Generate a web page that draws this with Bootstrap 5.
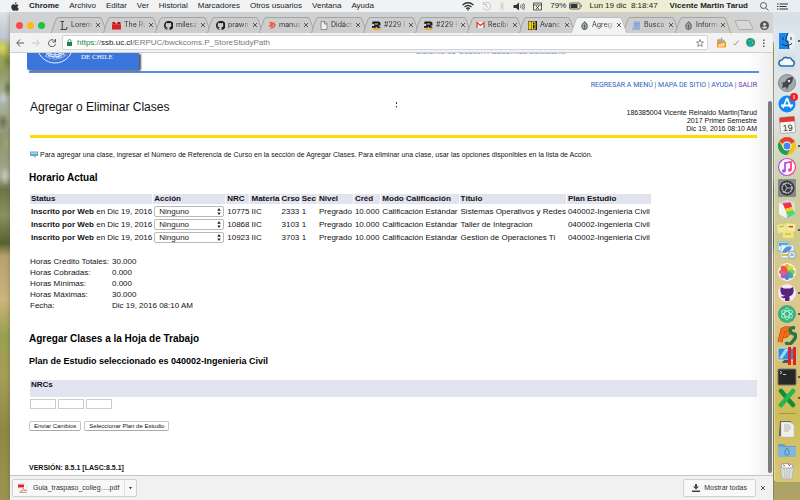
<!DOCTYPE html>
<html lang="es">
<head>
<meta charset="utf-8">
<meta name="viewport" content="width=device-width, initial-scale=1">
<title>Agregar o Eliminar Clases</title>
<link rel="stylesheet" href="https://cdn.jsdelivr.net/npm/bootstrap@5.3.0/dist/css/bootstrap.min.css">
<style>
body{font:8px/10px "Liberation Sans",Arial,sans-serif;color:#111;background:
 radial-gradient(ellipse 7px 9px at 2px 48px,#d9d95e,transparent),
 radial-gradient(ellipse 6px 8px at 8px 62px,#74853c,transparent),
 radial-gradient(ellipse 5px 7px at 3px 98px,#c3cbd0,transparent),
 radial-gradient(ellipse 5px 9px at 8px 88px,#6c7848,transparent),
 radial-gradient(ellipse 6px 9px at 3px 122px,#69744c,transparent),
 radial-gradient(ellipse 6px 12px at 7px 143px,#a0a376,transparent),
 radial-gradient(ellipse 6px 10px at 5px 176px,#c6c8ba,transparent),
 linear-gradient(#dde1e4 12px,#bcc6cd 38px,#a7ab52 48px,#8f9a60 70px,#aeb5a2 100px,#8d936f 140px,#a5a78d 175px,#6b7548 190px,#8d915f 215px,#55622f 243px,#b9a16f 256px,#cbb47d 300px,#98a050 335px,#a79d57 375px,#8e8844 430px,#9c9450 500px);}
.menubar{background:linear-gradient(90deg,#f1f2f3 60%,#ececd0 75%,#eeeed2 82%,#eef0ee 90%,#e7edf3);font-size:8px;line-height:12px;height:12px;color:#222;padding:0 12px 0 11px}
.menubar a{color:inherit;text-decoration:none}
.menubar svg,.tabs svg,.tools svg,.dock svg{display:block;flex:none}
.appmenu{gap:10px}
.status{gap:8px}
.desk{padding-left:10px}
.chromewin{background:#fff;box-shadow:0 0 4px #5558;border-radius:3px 3px 0 0}
.tabs{background:linear-gradient(90deg,#d0d1d2 70%,#cfcec4 85%,#d2d3d4);padding:5px 4px 0 6px;height:21px;border-radius:3px 3px 0 0}
.lights{gap:4px;margin-right:5px}
.lights button{width:7px;height:7px;border:0;border-radius:50%;padding:0}
.tab-item{height:16px;flex:1 1 0;min-width:0;padding-left:10px;gap:3px}
.tab-item .shape{position:absolute;left:0;top:0;width:calc(100% + 6px);height:16px;fill:#cdcdcd;stroke:#a4a4a4}
.tab-item a,.tab-item button,.tab-item .fav{position:relative;z-index:2}
.tab-item.current{z-index:3}
.tab-item.current .shape{fill:#f3f3f3;stroke:#bdbdbd}
.tab-item a{color:#333;text-decoration:none;font:7px/16px Inter,"Liberation Sans",sans-serif;width:21px;-webkit-mask-image:linear-gradient(90deg,#000 60%,#0003);mask-image:linear-gradient(90deg,#000 60%,#0003)}
.tab-item button,.closebar{border:0;background:none;padding:0;color:#555}
.newtab{margin-left:8px}
.person{margin-left:6px}
.tools{height:20px;background:#f2f2f2;border-bottom:1px solid #cfcfcf;padding:0 8px 0 6px;gap:8px}
.tools button{border:0;background:none;padding:0}
.extras{gap:7px}
.address{height:15px;background:#fff;border:1px solid #d4d4d4;border-radius:2px;padding:0 3px 0 4px;gap:5px;margin-left:-2px}
.url{font-size:8px;line-height:13px;color:#777}
.url b{font-weight:400;color:#222}.url i{font-style:normal;color:#16893c}
.pagebox{background:linear-gradient(90deg,#fff calc(100% - 26px),#eee);padding:0 16px 0 19px}
.thumb{position:absolute;right:1px;top:48px;bottom:2px;width:4px;border-radius:2px;background:#7b7b7b}
.banner{height:20px;border-bottom:2px solid #5791e0;margin-right:-2px}
.crest{position:relative;z-index:1;margin-left:-2px;width:112px;height:17px;background:#3b76dd;border-radius:0 0 2px 2px;box-shadow:2px 1px 2px #555}
.system{color:#5b8fe0;margin:-6px 193px 0 0}
.links{font:7px/10px Roboto,"Liberation Sans",sans-serif;padding-top:7px;color:#555}
.links a{color:#2b62bd;text-decoration:none}.links a.seen{color:#70339c}
.pagehead{border-bottom:3px solid #ffdb00;height:48px;padding:8px 0 2px;margin-left:1px}
.pagehead h1{font-size:12px;line-height:18px;margin:0;font-weight:400}
.who{font-size:7px;line-height:8px}
.help{margin:12px 0 0 1px;font-size:7px;gap:2px}
h2{font-size:10px;line-height:12px;font-weight:700;margin:0;color:#000}
h2.now{margin-top:12px}
h2.add{margin:22px 0 11px}
h3{font-size:9px;line-height:10px;font-weight:700;margin:0;color:#000}
.sched{border-collapse:separate;border-spacing:1px;margin-top:9px;white-space:nowrap}
.sched th{background:#e1e4ee;padding:0 1px;height:10px;line-height:10px}
.sched td{padding:0 1px;height:12px;line-height:11px}
.sched :is(th,td):is(:nth-child(1),:nth-child(3),:nth-child(4),:nth-child(5),:nth-child(10)){padding-right:0}
.sched select{display:block;width:70px;height:11px;font:8px/9px "Liberation Sans",sans-serif;border:1px solid #b8b8b8;border-radius:2px;padding:0 4px;appearance:none;color:#222;background:#fff url("data:image/svg+xml,%3Csvg xmlns='http://www.w3.org/2000/svg' viewBox='0 0 4 8'%3E%3Cpath d='M0 3L2 0 4 3zM0 5h4L2 8z' fill='%23222'/%3E%3C/svg%3E") no-repeat right 2px center/4px 7px}
.totals{margin:12px 0 0 1px}
.totals th{font-weight:400;padding:0;width:82px}.totals td{padding:0}.totals tr{height:11px;line-height:11px}
.band{background:#e1e4ee;height:17px;margin-top:14px;margin-left:1px;padding-left:1px;font-weight:700;line-height:10px}
.nrcs{gap:2px;margin:2px 0 0 1px}
.nrcs input{width:26px;height:10px;border:1px solid #ccc;padding:0 2px;font-size:7px;background:#fff}
.acts{gap:3px;margin-top:12px}
.acts button{font:6px/8px "Liberation Sans",sans-serif;border:1px solid #c4c4c4;border-bottom-color:#aaa;border-radius:2px;background:#fff;height:10px;padding:0 4px;display:flex;align-items:center;color:#111}
.ver{font-size:7px;margin-top:32px}
.shelf{height:25px;background:#f1f1f1;border-top:1px solid #c6c6c6;padding:0 3px 0 2px;font-size:7px}
.shelf .chip{border:1px solid #d2d2d2;border-radius:2px;background:#f8f8f8;height:18px;padding:0;font:inherit;color:#333}
.shelf .cell{padding:0 5px;height:16px}
.dock{width:27px;padding-left:1px}
.dockbox{margin-top:16px;border-radius:3px 0 0 3px;border-left:1px solid #eee8;background:linear-gradient(#dde4ec,#dfe4e6 80px,#cccda0 165px,#cfc98b 210px,#dfc78c 280px,#d6c070 340px,#cdbd58 385px,#dac670);padding:3px 0 1px 2px;gap:1px}
.dockbox hr{margin:4px 4px 4px 2px;border-top:1px solid #867c3c;opacity:.6}
.dockbox .run::after{content:"";width:2px;height:2px;border-radius:1px;background:#333;margin-left:1px}
.pointer{position:absolute;left:385px;top:49px}
.dock::after{content:"";flex:1;background:linear-gradient(#a8a263,#b1a46a)}
.dock{background:linear-gradient(#d8e0e8,#d8e0e8 30px,transparent 30px)}
</style>
<script src="https://cdn.jsdelivr.net/npm/bootstrap@5.3.0/dist/js/bootstrap.bundle.min.js"></script>
</head>
<body class="vh-100 overflow-hidden d-flex flex-column">
<svg width="0" height="0" class="position-absolute" aria-hidden="true">
<symbol id="tab" viewBox="0 0 58 16" preserveAspectRatio="none"><path d="M0 16.500C2 16 2 14 3 11L6 2.500Q7 .5 8 .5H50Q51 .5 52 2.500L55 11C56 14 56 16 58 16.500"/></symbol>
<symbol id="x" viewBox="0 0 6 6"><path d="M1 1l4 4M5 1L1 5" stroke="#555" stroke-width="1" fill="none"/></symbol>
<symbol id="gh" viewBox="0 0 16 16"><path fill="#1c1c1c" d="M8 0C3.580 0 0 3.580 0 8c0 3.540 2.290 6.530 5.470 7.590.4.070.550-.170.550-.380v-1.490C3.780 14.200 3.310 12.650 3.310 12.650c-.360-.920-.890-1.170-.890-1.170-.730-.500.050-.490.050-.490.810.060 1.230.830 1.230.830.720 1.230 1.880.870 2.340.670.070-.520.280-.870.510-1.070-1.780-.200-3.640-.890-3.640-3.950 0-.870.310-1.590.820-2.150-.080-.200-.360-1.020.080-2.120 0 0 .670-.210 2.200.820a7.600 7.600 0 0 1 4 0c1.530-1.040 2.200-.820 2.200-.820.440 1.100.160 1.920.080 2.120.510.560.820 1.270.820 2.150 0 3.070-1.870 3.750-3.650 3.950.290.250.540.730.540 1.480v2.600c0 .210.150.460.550.380A8 8 0 0 0 8 0z"/></symbol>
<symbol id="rr" viewBox="0 0 16 16"><path d="M1 1h11l3 2v5h-4l4 3v1H9L7 9v3H0V9h4V5H0z" fill="#181818"/><path d="M5 4.500h6v1.500H5z" fill="#ddd"/><path d="M1 13h14v3H3z" fill="#f5a623"/></symbol>
<symbol id="uc" viewBox="0 0 16 16"><path d="M8 0c2 3 6 4 6 9s-3 7-6 7-6-3-6-7S6 4 8 0z" fill="#4b6fa8"/><path d="M8 3l4 5-1 5H5L4 8z" fill="#eab83a"/><path d="M8 6v7M5.500 9h5" stroke="#32598f" stroke-width="1.500"/></symbol>
</svg>

<header class="menubar d-flex align-items-center justify-content-between text-nowrap">
<nav class="appmenu d-flex align-items-center">
<svg width="8" height="9" viewBox="0 0 16 18"><path fill="#333" d="M11 0c0 2-1.500 4-3.500 4C7.300 2 9 .3 11 0zM8 5.500c1 0 2-1 3.600-1 1.300 0 2.600.7 3.400 1.900-3 1.700-2.500 5.700.6 6.900-.7 1.900-2.300 4.400-3.900 4.400-1.200 0-1.700-.8-3.200-.8s-2 .8-3.200.8C3.300 17.700.5 13.500.5 10c0-3.600 2.300-5.500 4.300-5.500 1.300 0 2.300 1 3.200 1z"/></svg>
<a href="#"><b>Chrome</b></a><a href="#">Archivo</a><a href="#">Editar</a><a href="#">Ver</a><a href="#">Historial</a><a href="#">Marcadores</a><a href="#">Otros usuarios</a><a href="#">Ventana</a><a href="#">Ayuda</a>
</nav>
<div class="status d-flex align-items-center">
<svg width="12" height="9" viewBox="0 0 24 18"><g fill="none" stroke="#333" stroke-width="2.600"><path d="M1 6Q12-3 23 6M5 10q7-6 14 0M8.500 13.500q3.500-3 7 0"/></g><path d="M12 18l-2.500-3h5z" fill="#333"/></svg>
<svg width="9" height="9" viewBox="0 0 18 18"><path d="M3 4a8 8 0 1 1-1 7M9 4v5l4 3M3 0v5h5" fill="none" stroke="#b9b9a6" stroke-width="1.500"/></svg>
<svg width="6" height="9" viewBox="0 0 12 18"><path d="M2 5l8 8-4 4V1l4 4-8 8" fill="none" stroke="#c2c2ae" stroke-width="1.500"/></svg>
<svg width="12" height="9" viewBox="0 0 24 18"><path d="M1 6h5l6-5v16l-6-5H1z" fill="#333"/><path d="M15 6q2 3 0 6M18 4q4 5 0 10M21 2q5 7 0 14" fill="none" stroke="#444" stroke-width="1.500"/></svg>
<svg width="9" height="9" viewBox="0 0 18 18"><path d="M1 2h16v14H1zM1 6h16M6 8l6 6M12 8l-6 6" fill="none" stroke="#333" stroke-width="1.600"/></svg>
<span class="d-flex align-items-center">79%&nbsp;
<svg width="13" height="8" viewBox="0 0 26 16"><rect x="1" y="2" width="21" height="12" rx="2" fill="none" stroke="#333" stroke-width="1.500"/><path d="M3 4h14v8H3z" fill="#333"/><path d="M24 5q3 3 0 6z" fill="#333"/></svg></span>
<span>Lun 19 dic&nbsp; 8:18:47</span><b class="mx-1">Vicente Martin Tarud</b>
<svg width="9" height="9" viewBox="0 0 18 18"><path d="M12 12l5 5M13 7A6 6 0 1 1 1 7a6 6 0 0 1 12 0z" fill="none" stroke="#333" stroke-width="1.600"/></svg>
<svg width="11" height="7" viewBox="0 0 22 14"><path d="M0 2h3M5 2h17M0 7h3M5 7h14M0 12h3M5 12h17" stroke="#333" stroke-width="2"/></svg>
</div>
</header>

<div class="desk d-flex flex-grow-1 overflow-hidden">
<div class="chromewin d-flex flex-column flex-grow-1 overflow-hidden">
<div class="tabs d-flex align-items-center text-nowrap">
<div class="lights d-flex"><button type="button" style="background:#fc4948" aria-label="Cerrar"></button><button type="button" style="background:#fdb912" aria-label="Minimizar"></button><button type="button" style="background:#19c637" aria-label="Ampliar"></button></div>
<div class="d-flex flex-fill">
<div class="tab-item position-relative d-flex align-items-center"><svg class="shape"><use href="#tab"/></svg><svg class="fav" width="8" height="9" viewBox="0 0 16 18"><path d="M1 1h7M4.500 1v15M1 17h12l1-5" fill="none" stroke="#444" stroke-width="2"/></svg><a href="#">Lorem</a><button type="button" aria-label="Cerrar pestaña"><svg width="6" height="6"><use href="#x"/></svg></button></div>
<div class="tab-item position-relative d-flex align-items-center"><svg class="shape"><use href="#tab"/></svg><svg class="fav" width="9" height="9" viewBox="0 0 18 18"><path d="M1 2h5v3h5V2h6v5H1z" fill="#b80f12"/><path d="M0 7h18v10H0z" fill="#dd2023"/></svg><a href="#">The Ru</a><button type="button" aria-label="Cerrar pestaña"><svg width="6" height="6"><use href="#x"/></svg></button></div>
<div class="tab-item position-relative d-flex align-items-center"><svg class="shape"><use href="#tab"/></svg><svg class="fav" width="9" height="9"><use href="#gh"/></svg><a href="#">milesz</a><button type="button" aria-label="Cerrar pestaña"><svg width="6" height="6"><use href="#x"/></svg></button></div>
<div class="tab-item position-relative d-flex align-items-center"><svg class="shape"><use href="#tab"/></svg><svg class="fav" width="9" height="9"><use href="#gh"/></svg><a href="#">prawn</a><button type="button" aria-label="Cerrar pestaña"><svg width="6" height="6"><use href="#x"/></svg></button></div>
<div class="tab-item position-relative d-flex align-items-center"><svg class="shape"><use href="#tab"/></svg><svg class="fav" width="8" height="8" viewBox="0 0 16 16"><path d="M3 2q4 4 10 2-3 3-8 3M2 9q5 2 8-1M5 14q8 0 9-8" fill="none" stroke="#ec5b2a" stroke-width="3"/></svg><a href="#">manua</a><button type="button" aria-label="Cerrar pestaña"><svg width="6" height="6"><use href="#x"/></svg></button></div>
<div class="tab-item position-relative d-flex align-items-center"><svg class="shape"><use href="#tab"/></svg><svg class="fav" width="8" height="9" viewBox="0 0 16 18"><path d="M2 1h8l4 4v12H2zM9 1v5h5" fill="#eee" stroke="#777" stroke-width="1.500"/></svg><a href="#">Didáct</a><button type="button" aria-label="Cerrar pestaña"><svg width="6" height="6"><use href="#x"/></svg></button></div>
<div class="tab-item position-relative d-flex align-items-center"><svg class="shape"><use href="#tab"/></svg><svg class="fav" width="9" height="9"><use href="#rr"/></svg><a href="#">#229 P</a><button type="button" aria-label="Cerrar pestaña"><svg width="6" height="6"><use href="#x"/></svg></button></div>
<div class="tab-item position-relative d-flex align-items-center"><svg class="shape"><use href="#tab"/></svg><svg class="fav" width="9" height="9"><use href="#rr"/></svg><a href="#">#229 P</a><button type="button" aria-label="Cerrar pestaña"><svg width="6" height="6"><use href="#x"/></svg></button></div>
<div class="tab-item position-relative d-flex align-items-center"><svg class="shape"><use href="#tab"/></svg><svg class="fav" width="9" height="8" viewBox="0 0 18 14"><path d="M1 1h16v12H1z" fill="#f5f5f5"/><path d="M2 13V2l7 6 7-6v11" fill="none" stroke="#d9382c" stroke-width="2.500"/></svg><a href="#">Recibi</a><button type="button" aria-label="Cerrar pestaña"><svg width="6" height="6"><use href="#x"/></svg></button></div>
<div class="tab-item position-relative d-flex align-items-center"><svg class="shape"><use href="#tab"/></svg><svg class="fav" width="9" height="9" viewBox="0 0 18 18"><path d="M0 0h18v18H0z" fill="#222"/><path d="M1 1h5v16H1z" fill="#f3d20e"/><path d="M7 1h8v16H7z" fill="#f8df36"/><path d="M10 3h3v3h-3zM10 7h3v8h-3z" fill="#111"/></svg><a href="#">Avanc</a><button type="button" aria-label="Cerrar pestaña"><svg width="6" height="6"><use href="#x"/></svg></button></div>
<div class="tab-item current position-relative d-flex align-items-center"><svg class="shape"><use href="#tab"/></svg><svg class="fav" width="9" height="9"><use href="#uc"/></svg><a href="#">Agrega</a><button type="button" aria-label="Cerrar pestaña"><svg width="6" height="6"><use href="#x"/></svg></button></div>
<div class="tab-item position-relative d-flex align-items-center"><svg class="shape"><use href="#tab"/></svg><svg class="fav" width="9" height="9" viewBox="0 0 18 18"><path d="M3 1h13v16H3z" fill="#8fb0d8"/><path d="M1 15h13v2H1zM6 5h7M6 8h7" fill="#eef" stroke="#6e93c0"/></svg><a href="#">Busca</a><button type="button" aria-label="Cerrar pestaña"><svg width="6" height="6"><use href="#x"/></svg></button></div>
<div class="tab-item position-relative d-flex align-items-center"><svg class="shape"><use href="#tab"/></svg><svg class="fav" width="9" height="9"><use href="#uc"/></svg><a href="#">Inform</a><button type="button" aria-label="Cerrar pestaña"><svg width="6" height="6"><use href="#x"/></svg></button></div>
</div>
<svg class="newtab" width="20" height="10" viewBox="0 0 20 10"><path d="M1 1q0-.5 1-.5h12q1 0 1.500 1L19 8.500q0 1-1 1H6q-1 0-1.500-1z" fill="#d8d8d8" stroke="#aaa"/></svg>
<svg class="person" width="9" height="9" viewBox="0 0 18 18"><circle cx="9" cy="9" r="9" fill="#555"/><circle cx="9" cy="6.500" r="3" fill="#d4d4d4"/><path d="M3.500 13q5.500-5 11 0-5.500 5-11 0z" fill="#d4d4d4"/></svg>
</div>

<div class="tools d-flex align-items-center">
<button type="button" aria-label="Atrás"><svg width="8" height="8" viewBox="0 0 16 16"><path d="M16 8H2M8 1L1.500 8 8 15" fill="none" stroke="#555" stroke-width="2"/></svg></button>
<button type="button" aria-label="Adelante"><svg width="8" height="8" viewBox="0 0 16 16"><path d="M0 8h14M8 1l6.500 7L8 15" fill="none" stroke="#c5c5c5" stroke-width="2"/></svg></button>
<button type="button" aria-label="Recargar"><svg width="8" height="8" viewBox="0 0 16 16"><path d="M13.500 4A7 7 0 1 0 15 10M15 0v6H9" fill="none" stroke="#555" stroke-width="2"/></svg></button>
<div class="address d-flex align-items-center flex-grow-1">
<svg width="5" height="7" viewBox="0 0 10 14"><path d="M0 6h10v8H0z" fill="#16893c"/><path d="M2 6V4q0-3 3-3t3 3v2" fill="none" stroke="#16893c" stroke-width="1.600"/></svg>
<span class="url flex-grow-1"><i>https</i>://<b>ssb.uc.cl</b>/ERPUC/bwckcoms.P_StoreStudyPath</span>
<svg width="8" height="8" viewBox="0 0 16 16"><path d="M8 1l2 5h5l-4 3.500 1.500 5.500L8 12l-4.500 3L5 9.500 1 6h5z" fill="none" stroke="#555" stroke-width="1.300"/></svg>
</div>
<div class="extras d-flex align-items-center">
<svg width="10" height="12" viewBox="0 0 20 24"><path d="M2 6l4-3 2 3 3-6 3 6 4 1v6H2z" fill="#aaa"/><path d="M2 10h18v11H2z" fill="#fb940f"/><text x="11" y="19" text-anchor="middle" font-size="10" font-weight="700" fill="#fff">off</text></svg>
<svg width="6" height="6" viewBox="0 0 12 12"><path d="M1 7l3 3 7-9" fill="none" stroke="#999" stroke-width="2"/></svg>
<svg width="9" height="9" viewBox="0 0 18 18"><circle cx="9" cy="9" r="9" fill="#20a4c4"/><path d="M2 4q4-5 8-3L8 6 5 7l2 4-2 4Q0 12 2 4zM11 6l6-1q2 6-3 11l-3-4z" fill="#2f9b3b"/><path d="M5 4l3 1-2 2zM12 8h3l-2 4z" fill="#e7d63e"/></svg>
<button type="button" aria-label="Menú"><svg width="3" height="8" viewBox="0 0 6 16"><path d="M2 1h3v3H2zM2 7h3v3H2zM2 13h3v3H2z" fill="#555"/></svg></button>
</div>
</div>

<main class="pagebox position-relative flex-grow-1 overflow-hidden">
<div class="banner d-flex justify-content-between align-items-start">
<svg class="crest" viewBox="0 0 112 17"><g fill="none" stroke="#e5eefc"><circle cx="28" cy="-8" r="18"/><circle cx="28" cy="-8" r="12"/><path d="M20 -2v-5M24 2v-6M28 3v-8M32 2v-6M36-1v-5M21 0q7 4 14 0" stroke-width="1"/></g><path id="arc" d="M12-5a17 17 0 0 0 32 0" fill="none"/><text font-family="Liberation Serif" font-size="5" fill="#fff"><textPath href="#arc" startOffset="10">DE·CHILE</textPath></text><text x="54" y="6" font-family="Liberation Serif" font-size="7" fill="#fff">DE CHILE</text></svg>
<span class="system">Sistema de Gestión Académica Estudiantil</span>
</div>
<nav class="links text-end"><a href="#">REGRESAR A MENÚ</a> | <a href="#">MAPA DE SITIO</a> | <a href="#">AYUDA</a> | <a href="#" class="seen">SALIR</a></nav>
<div class="pagehead d-flex justify-content-between"><h1>Agregar o Eliminar Clases</h1><div class="who text-end align-self-end">186385004 Vicente Reinaldo Martin|Tarud<br>2017 Primer Semestre<br>Dic 19, 2016 08:10 AM</div></div>
<svg class="pointer" width="3" height="6" viewBox="0 0 3 6"><path d="M1 0h1v2H1zM1 4h1v1l-1 1z" fill="#333"/></svg>
<p class="help d-flex align-items-center"><svg width="8" height="8" viewBox="0 0 16 16"><path d="M0 1h16v9h-5v4l-4-4H0z" fill="#65a9d1"/><path d="M2 3h12v3H2z" fill="#b1d4e8"/></svg><span>Para agregar una clase, ingresar el Número de Referencia de Curso en la sección de Agregar Clases. Para eliminar una clase, usar las opciones disponibles en la lista de Acción.</span></p>
<h2 class="now" id="hz">Horario Actual</h2>
<table class="sched" aria-labelledby="hz">
<thead><tr><th>Status</th><th>Acción</th><th>NRC</th><th>Materia</th><th>Crso</th><th>Sec</th><th>Nivel</th><th>Créd</th><th>Modo Calificación</th><th>Título</th><th>Plan Estudio</th></tr></thead>
<tbody>
<tr><td><b>Inscrito por Web</b> en Dic 19, 2016</td><td><select aria-label="Acción 10775"><option>Ninguno</option></select></td><td>10775</td><td>IIC</td><td>2333</td><td>1</td><td>Pregrado</td><td>10.000</td><td>Calificación Estándar</td><td>Sistemas Operativos y Redes</td><td>040002-Ingenieria Civil</td></tr>
<tr><td><b>Inscrito por Web</b> en Dic 19, 2016</td><td><select aria-label="Acción 10868"><option>Ninguno</option></select></td><td>10868</td><td>IIC</td><td>3103</td><td>1</td><td>Pregrado</td><td>10.000</td><td>Calificación Estándar</td><td>Taller de Integracion</td><td>040002-Ingenieria Civil</td></tr>
<tr><td><b>Inscrito por Web</b> en Dic 19, 2016</td><td><select aria-label="Acción 10923"><option>Ninguno</option></select></td><td>10923</td><td>IIC</td><td>3703</td><td>1</td><td>Pregrado</td><td>10.000</td><td>Calificación Estándar</td><td>Gestion de Operaciones Ti</td><td>040002-Ingenieria Civil</td></tr>
</tbody></table>
<table class="totals"><tbody>
<tr><th scope="row">Horas Crédito Totales:</th><td>30.000</td></tr><tr><th scope="row">Horas Cobradas:</th><td>0.000</td></tr><tr><th scope="row">Horas Mínimas:</th><td>0.000</td></tr><tr><th scope="row">Horas Máximas:</th><td>30.000</td></tr><tr><th scope="row">Fecha:</th><td>Dic 19, 2016 08:10 AM</td></tr>
</tbody></table>
<h2 class="add">Agregar Clases a la Hoja de Trabajo</h2>
<h3>Plan de Estudio seleccionado es 040002-Ingenieria Civil</h3>
<div class="band">NRCs</div>
<div class="nrcs d-flex"><input type="text" aria-label="NRC 1"><input type="text" aria-label="NRC 2"><input type="text" aria-label="NRC 3"></div>
<div class="acts d-flex"><button type="button">Enviar Cambios</button><button type="button">Seleccionar Plan de Estudio</button></div>
<div class="ver"><b>VERSIÓN: 8.5.1 [LASC:8.5.1]</b></div>
<div class="thumb"></div>
</main>

<footer class="shelf d-flex align-items-center justify-content-between">
<div class="chip d-flex align-items-center"><span class="cell d-flex align-items-center gap-1"><svg width="9" height="10" viewBox="0 0 18 20"><path d="M1 1h10l6 5v13H3z" fill="#fff" stroke="#ccc"/><path d="M0 3h12v6H0z" fill="#e1251b"/><path d="M5 17q6-4 5-7 2 5 7 5-7 0-12 2z" fill="none" stroke="#e1251b"/><path d="M3 19h14" stroke="#777"/></svg>&nbsp;Guia_traspaso_colleg….pdf</span><button type="button" class="border-0 border-start bg-transparent p-0 px-1 h-100" aria-label="Opciones"><svg width="3" height="3" viewBox="0 0 4 4" class="d-block"><path d="M0 0h4L2 3z" fill="#333"/></svg></button></div>
<div class="d-flex align-items-center"><button type="button" class="chip d-flex align-items-center gap-1 px-2"><svg width="8" height="8" viewBox="0 0 16 16"><path d="M6 0h4v5h4l-6 6-6-6h4zM0 13h16v3H0z" fill="#444"/></svg>Mostrar todas</button><button type="button" class="closebar p-1" aria-label="Cerrar barra"><svg width="6" height="6" class="d-block"><use href="#x"/></svg></button></div>
</footer>
</div>

<aside class="dock d-flex flex-column flex-shrink-0">
<div class="dockbox d-flex flex-column">
<div class="run d-flex align-items-center"><svg width="20" height="20" viewBox="0 0 20 20"><rect x="2" y="2" width="16" height="16" rx="1" fill="#e8f0f7"/><path d="M2 2h9q-2 4-2 8h2q0 5 1 8H2z" fill="#1789ee"/><path d="M6 6v3M14 6v3M5 13q5 3.500 10-.5M11 2q-2 4-2 8h2q0 5 1 8" stroke="#16324f" fill="none"/></svg></div>
<div class="d-flex"><svg width="20" height="20" viewBox="0 0 20 20"><rect x="1" y="1" width="18" height="18" rx="2" fill="#d6e1e9"/><path d="M5 14a3 3 0 0 1 0-6q2-4 6-2 3-1 4 2 4 2 1 6z" fill="#f2f7fb" stroke="#2c6fa8" stroke-width="1.600"/></svg></div>
<div class="d-flex"><svg width="20" height="20" viewBox="0 0 20 20"><circle cx="10" cy="10" r="8.500" fill="#a3a9ad" stroke="#888"/><path d="M16 4q-6 0-8 5l-4 1 2 1-1 4 4-1 1 3 2-5q4-2 4-8z" fill="#43484c"/><circle cx="12" cy="8" r="1.300" fill="#ddd"/></svg></div>
<div class="d-flex"><svg width="20" height="20" viewBox="0 0 20 20" overflow="visible"><circle cx="10" cy="10" r="8.500" fill="#1288f4"/><path d="M10 4l-4 10M10 4l4 10M4 11.500h12" stroke="#fff" stroke-width="1.800" fill="none"/><circle cx="17" cy="3" r="4" fill="#f51f22"/><path d="M17 1v4" stroke="#fff"/></svg></div>
<div class="d-flex"><svg width="20" height="20" viewBox="0 0 20 20"><g transform="rotate(-5 10 10)"><rect x="3" y="2" width="15" height="16" rx="1" fill="#f5f5f3" stroke="#999" stroke-width=".7"/><path d="M3 2h15v5H3z" fill="#dc3931"/><text x="10.500" y="16" text-anchor="middle" font-size="9" fill="#333">19</text></g></svg></div>
<div class="run d-flex align-items-center"><svg width="20" height="20" viewBox="0 0 20 20"><circle cx="10" cy="10" r="9" fill="#fbc116"/><path d="M10 10L2.200 5.500A9 9 0 0 1 17.800 5.500z" fill="#dd4436"/><path d="M2.200 5.500A9 9 0 0 0 10 19l4-7-4-2-4 2z" fill="#1e9e57"/><path d="M10 5h8l-8 5z" fill="#dd4436"/><circle cx="10" cy="10" r="4.500" fill="#fff"/><circle cx="10" cy="10" r="3.500" fill="#4586ef"/></svg></div>
<div class="d-flex"><svg width="20" height="20" viewBox="0 0 20 20"><defs><linearGradient id="g"><stop stop-color="#a34cf4"/><stop offset="1" stop-color="#f83779"/></linearGradient></defs><circle cx="10" cy="10" r="8.500" fill="#fafaff" stroke="url(#g)" stroke-width="1.200"/><path d="M8 14V6l6-1v8" fill="none" stroke="url(#g)" stroke-width="1.700"/><circle cx="6.800" cy="14" r="1.800" fill="#8a5bed"/><circle cx="12.800" cy="13" r="1.800" fill="#f34293"/></svg></div>
<div class="d-flex"><svg width="20" height="20" viewBox="0 0 20 20"><rect x="1" y="1" width="18" height="18" rx="1" fill="#828990"/><circle cx="10" cy="10" r="7.500" fill="#34373a"/><circle cx="10" cy="10" r="5" fill="none" stroke="#bbb" stroke-width="1.500" stroke-dasharray="2 .6"/><path d="M10 10h6M10 10L7 5M10 10l-3 5" stroke="#bbb"/></svg></div>
<div class="d-flex"><svg width="20" height="20" viewBox="0 0 20 20"><path d="M2 4l8-3 8 3v11l-8 4-8-4z" fill="#d8dddf"/><path d="M2 4l7 3v12l-7-4z" fill="#f2f4f4"/><path d="M5 4l8-1 1 3-6 1z" fill="#e34bdd"/><path d="M6 5l8-1 1 4-7 2z" fill="#f53138"/><path d="M8 10l7-2 1 3-7 2z" fill="#fbc520"/><path d="M9 13l7-2 2 3-7 3z" fill="#55dd44"/><path d="M11 17l7-3v1l-8 4z" fill="#35b8e8"/></svg></div>
<div class="run d-flex align-items-center"><svg width="20" height="20" viewBox="0 0 20 20"><path d="M0 5l9-1 1 8-9 1z" fill="#f2e995"/><path d="M9 3l10 1-1 8-9-1z" fill="#f5ee9f" stroke="#d1c66c" stroke-width=".5"/><path d="M6 11l10-1 1 8H6z" fill="#f1e581"/><path d="M2 7l5-1M11 7l5 .5M8 14h6" stroke="#b8a94b"/><path d="M12 6.500h4" stroke="#d26"/></svg></div>
<div class="d-flex"><svg width="20" height="20" viewBox="0 0 20 20"><rect x="1" y="1" width="11" height="9" fill="#e5f1f8" stroke="#8bb"/><path d="M2 2h9v3H2z" fill="#35a4e6"/><rect x="4" y="4" width="13" height="13" fill="#eef3f6" stroke="#a6bfca"/><path d="M5 12q3-9 10-6-2 6-10 6z" fill="#5690d6"/><path d="M5 13h6v2H5z" fill="#dfbc3e"/><circle cx="15" cy="14" r="4" fill="#dbe5ea" stroke="#8da3ae"/><path d="M15 12v3M13 14h4" stroke="#8da3ae"/></svg></div>
<div class="d-flex"><svg width="20" height="20" viewBox="0 0 20 20"><circle cx="10" cy="10" r="9" fill="#f7f7f2"/><g opacity=".9"><ellipse cx="10" cy="6" rx="2.700" ry="4" fill="#fa9d1d"/><ellipse cx="10" cy="6" rx="2.700" ry="4" fill="#dfd52c" transform="rotate(45 10 10)"/><ellipse cx="10" cy="6" rx="2.700" ry="4" fill="#7dc64b" transform="rotate(90 10 10)"/><ellipse cx="10" cy="6" rx="2.700" ry="4" fill="#35a583" transform="rotate(135 10 10)"/><ellipse cx="10" cy="6" rx="2.700" ry="4" fill="#4778d0" transform="rotate(180 10 10)"/><ellipse cx="10" cy="6" rx="2.700" ry="4" fill="#8e57bd" transform="rotate(225 10 10)"/><ellipse cx="10" cy="6" rx="2.700" ry="4" fill="#d5528f" transform="rotate(270 10 10)"/><ellipse cx="10" cy="6" rx="2.700" ry="4" fill="#ec4434" transform="rotate(315 10 10)"/></g></svg></div>
<div class="run d-flex align-items-center"><svg width="20" height="20" viewBox="0 0 20 20"><circle cx="10" cy="10" r="9" fill="#f1eaf5"/><path d="M4 4l3 1.500h6L16 4q1 3 .5 5-1 4-4 4v5H8v-3q-3 1-4-2 2 1 4-.5-4 0-4.500-4Q3 6 4 4z" fill="#58217e"/></svg></div>
<div class="run d-flex align-items-center"><svg width="20" height="20" viewBox="0 0 20 20"><circle cx="10" cy="10" r="9" fill="#32b37f"/><g fill="none" stroke="#bdf0d8" stroke-width=".9"><ellipse cx="10" cy="10" rx="2.500" ry="6"/><ellipse cx="10" cy="10" rx="2.500" ry="6" transform="rotate(60 10 10)"/><ellipse cx="10" cy="10" rx="2.500" ry="6" transform="rotate(120 10 10)"/></g></svg></div>
<div class="d-flex"><svg width="20" height="20" viewBox="0 0 20 20"><path d="M3 17L6 5q7-3 6 1t-5 5" fill="none" stroke="#a93f08" stroke-width="5"/><path d="M3 17L6 5q7-3 6 1t-5 5" fill="none" stroke="#f26c1e" stroke-width="4"/><path d="M18 3q-5-1-5 2t4 4-1 7-7 1" fill="none" stroke="#28774a" stroke-width="3.500"/></svg></div>
<div class="d-flex"><svg width="20" height="20" viewBox="0 0 20 20"><rect x="1" y="2" width="16" height="12" fill="#2a91d2" stroke="#dde"/><path d="M2 12L8 3h4L5 13z" fill="#9bd8f3"/><path d="M7 14h5v3H5z" fill="#555"/><path d="M11 1h3v18h-3zM16 1h3v18h-3z" fill="#ee1c1f"/></svg></div>
<div class="run d-flex align-items-center"><svg width="20" height="20" viewBox="0 0 20 20"><rect x="1" y="2" width="18" height="16" rx="1" fill="#262826" stroke="#777"/><path d="M3 4l2 1.500L3 7M6 7.500h3" fill="none" stroke="#ddd" stroke-width=".9"/></svg></div>
<div class="run d-flex align-items-center"><svg width="20" height="20" viewBox="0 0 20 20"><path d="M4 3l12 14" stroke="#158b37" stroke-width="4.500" stroke-linecap="round"/><path d="M16 3L4 17" stroke="#27b64c" stroke-width="4.500" stroke-linecap="round"/></svg></div>
<hr>
<div class="d-flex"><svg width="20" height="20" viewBox="0 0 20 20"><path d="M3 2h11v15H2z" fill="#555"/><path d="M4 3h9l4 3v12H4z" fill="#efefed" stroke="#bbb" stroke-width=".5"/><path d="M7 6h6M7 8h7M7 10h7M7 12h5" stroke="#aaa" stroke-width=".8"/></svg></div>
<div class="d-flex"><svg width="20" height="20" viewBox="0 0 20 20"><path d="M1 4h6l2 2h10v11H1z" fill="#64a0c8"/><path d="M1 7h18v10H1z" fill="#80b8dd"/><path d="M10 8q-5 7 0 7t0-7z" fill="none" stroke="#4d88b0"/></svg></div>
<div class="d-flex"><svg width="20" height="20" viewBox="0 0 20 20"><path d="M3 3h14l-2 15H5z" fill="#dcdedb" stroke="#b5b5af"/><path d="M4 4q3-3 12 0l-1 3H5z" fill="#fff" stroke="#777" stroke-width=".6"/><path d="M6 4l2 1M11 3l2 2" stroke="#c44"/><path d="M7 8l1 9M10 8v9M13 8l-1 9" stroke="#bfc1be"/></svg></div>
</div>
</aside>
</div>
</body>
</html>
